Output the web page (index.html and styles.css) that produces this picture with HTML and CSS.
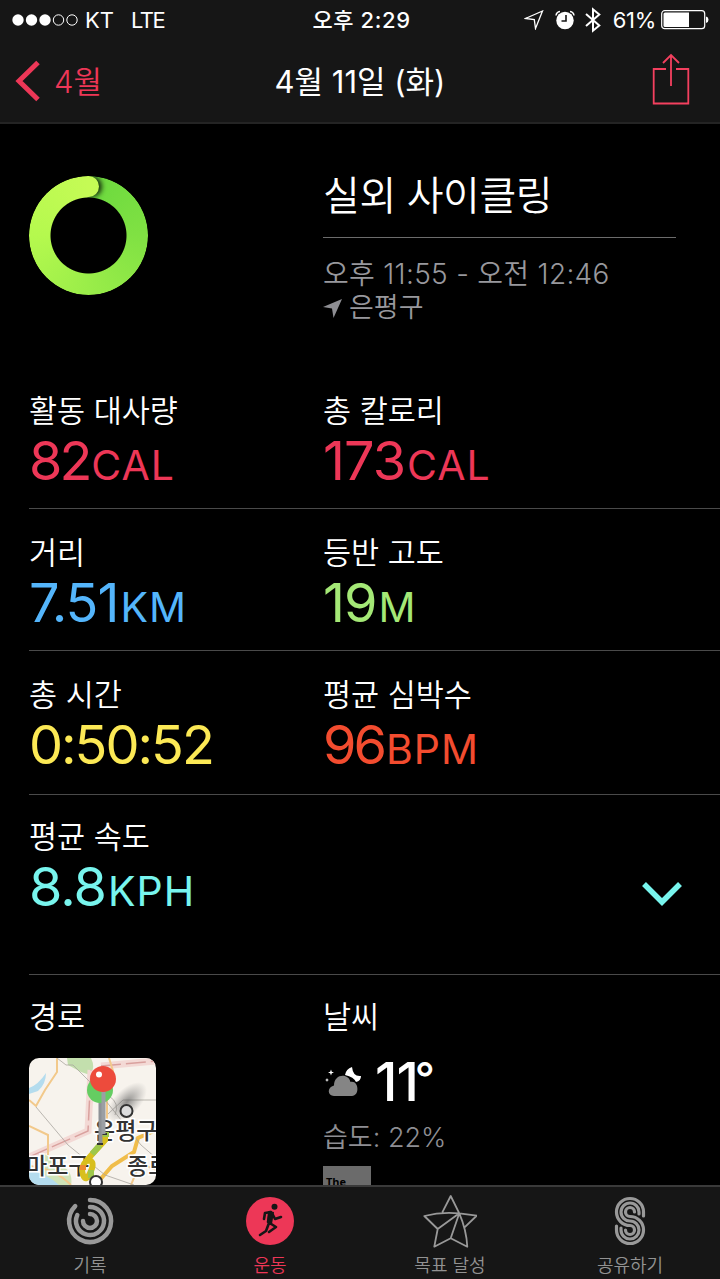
FILE: index.html
```html
<!DOCTYPE html>
<html lang="ko">
<head>
  <meta charset="UTF-8">
  <meta name="viewport" content="width=device-width, initial-scale=1.0">
  <title>실외 사이클링</title>
  <link rel="stylesheet" href="styles.css">
</head>
<body>

  <div class="phone">
    <header>
      <div class="status-bar">
        <div class="carrier">
          <svg width="66" height="14" viewBox="0 0 66 14">
            <g fill="#fff"><circle cx="6" cy="7" r="5.7"/><circle cx="19.5" cy="7" r="5.7"/><circle cx="33" cy="7" r="5.7"/></g>
            <g fill="none" stroke="#fff"><circle cx="46.5" cy="7" r="5.2"/><circle cx="60" cy="7" r="5.2"/></g>
          </svg>
          <span class="carrier-name">KT</span>
          <span class="network">LTE</span>
        </div>
        <div class="clock">오후 2:29</div>
        <div class="indicators">
          <svg class="location" width="20" height="20" viewBox="0 0 20 20">
            <path d="M18.5 1 1.5 8.5 10.3 9.7 11.5 18.5Z" fill="none" stroke="#fff" stroke-width="1.3"/>
          </svg>
          <svg class="alarm" width="20" height="20" viewBox="0 0 20 20">
            <circle cx="10" cy="10.5" r="8.7" fill="#fff"/>
            <path d="M1 5.5Q1.5 2 5 1.5M19 5.5Q18.5 2 15 1.5" fill="none" stroke="#fff" stroke-width="1.5"/>
            <path d="M11 5v6H6.5" fill="none" stroke="#161616" stroke-width="1.6"/>
          </svg>
          <svg class="bluetooth" width="16" height="26" viewBox="0 0 16 26">
            <path d="M1 7 14.3 18.5 8 23.7V2.3L14.3 7.5 1 19" fill="none" stroke="#fff" stroke-width="2"/>
          </svg>
          <span class="percent">61%</span>
          <svg width="48" height="20" viewBox="0 0 48 20">
            <rect x="0.7" y="0.7" width="43" height="18" rx="3" fill="none" stroke="#fff" stroke-width="1.2"/>
            <path d="M4 2.5H28V17H4Q2.5 17 2.5 15.5V4Q2.5 2.5 4 2.5Z" fill="#fff"/>
            <path d="M45 6.5Q47.5 7 47.5 9.7T45 13Z" fill="#fff"/>
          </svg>
        </div>
      </div>

      <nav class="nav-bar">
        <a class="back">
          <svg width="26" height="42" viewBox="0 0 26 42"><path d="M23 2.5 4 21 23 39.5" fill="none" stroke="#ed3757" stroke-width="5"/></svg>
          <span>4월</span>
        </a>
        <h1>4월 11일 (화)</h1>
        <a class="share">
          <svg width="38" height="52" viewBox="0 0 38 52">
            <path d="M14 16H1.7V50.5H36.3V16H24M19 33V2M11 10 19 2 27 10" fill="none" stroke="#f4405f" stroke-width="1.8"/>
          </svg>
        </a>
      </nav>
    </header>

    <main>
      <section class="summary">
        <div class="ring"></div>
        <div class="summary-info">
          <h2>실외 사이클링</h2>
          <p class="time">오후 11:55 - 오전 12:46</p>
          <p class="place">
            <svg width="19" height="19" viewBox="0 0 19 19"><path d="M19 0 0 8 9 9.5 10.5 19Z" fill="#8e8e93"/></svg>
            <span>은평구</span>
          </p>
        </div>
      </section>

      <section class="row">
        <div class="stat">
          <div class="label">활동 대사량</div>
          <div class="value move">82<span class="unit">CAL</span></div>
        </div>
        <div class="stat">
          <div class="label">총 칼로리</div>
          <div class="value wide move">173<span class="unit">CAL</span></div>
        </div>
      </section>

      <section class="row">
        <div class="stat">
          <div class="label">거리</div>
          <div class="value wide distance">7.51<span class="unit">KM</span></div>
        </div>
        <div class="stat">
          <div class="label">등반 고도</div>
          <div class="value wide elevation">19<span class="unit">M</span></div>
        </div>
      </section>

      <section class="row time-row">
        <div class="stat">
          <div class="label">총 시간</div>
          <div class="value duration">0:50:52</div>
        </div>
        <div class="stat">
          <div class="label">평균 심박수</div>
          <div class="value heart">96<span class="unit">BPM</span></div>
        </div>
      </section>

      <section class="row speed-row">
        <div class="stat">
          <div class="label">평균 속도</div>
          <div class="value wide speed">8.8<span class="unit">KPH</span></div>
        </div>
        <svg class="expand" width="40" height="26" viewBox="0 0 40 26"><path d="M2 3 20 21 38 3" fill="none" stroke="#78f5ee" stroke-width="5.5"/></svg>
      </section>

      <section class="row last-row">
        <div class="stat">
          <div class="label">경로</div>
          <svg class="map" width="127" height="127" viewBox="0 0 127 127">
            <defs>
              <radialGradient id="pinShadow"><stop offset="0" stop-color="#555" stop-opacity="0.65"/><stop offset="1" stop-color="#777" stop-opacity="0"/></radialGradient>
            </defs>
            <rect width="127" height="127" fill="#f7f3ed"/>
            <path d="M38 0H62Q67 10 61 17L52 14 39 7Z" fill="#c3dfad"/>
            <path d="M14 95 30 106Q45 113 42 127H22L10 108Z" fill="#cfe3b8"/>
            <path d="M17 15Q17 26 9 33L0 36V30Q9 27 17 15ZM0 112Q17 115 30 127H0Z" fill="#b4dcee"/>
            <path d="M0 99 59 73 62 12M72 8 127 3" fill="none" stroke="#f3d9d5" stroke-width="7"/>
            <path d="M0 99 59 73 62 12M72 8 127 3" fill="none" stroke="#d9a19e" stroke-width="1.5" stroke-dasharray="20 5"/>
            <g fill="none" stroke="#f2c98b" stroke-width="2">
              <path d="M28 0V14L16 32 7 48 0 42M0 68 19 77V97M80 0 84 13 78 38V61M102 127 111 105 127 112M0 108Q25 110 42 127"/>
              <path d="M127 72 109 80 105 94 83 108 69 124" stroke="#f0bd4a" stroke-width="4"/>
            </g>
            <path d="M28 0 37 7H44L65 28 112 87 127 100M7 49 39 87 76 117 105 127M79 56 94 42H127M80 38Q91 45 86 57" fill="none" stroke="#aaa69f" stroke-width="0.8"/>
            <ellipse cx="98" cy="44" rx="25" ry="13" transform="rotate(-45 98 44)" fill="url(#pinShadow)"/>
            <circle cx="97.5" cy="53" r="6" fill="#ddd" stroke="#333" stroke-width="2"/>
            <g class="map-label">
              <text x="65" y="81">은평구</text>
              <text x="-3" y="116">마포구</text>
              <text x="98" y="116">종로</text>
            </g>
            <path d="M76 76V82L58 102Q51 109 54 117T62 113 57 103" fill="none" stroke="#d8bf1d" stroke-width="6"/>
            <path d="M71 87 63 96M62 112V120M77 74V79" stroke="#9dc74b" stroke-width="6"/>
            <path d="M54 107V112" stroke="#ed8c31" stroke-width="6"/>
            <circle cx="67" cy="124" r="6" fill="#fff" stroke="#333" stroke-width="2"/>
            <path d="M68 86H74M72 76H78" stroke="#333" stroke-width="2"/>
            <path d="M71.5 42V85" stroke="#8e9297" stroke-width="4"/>
            <circle cx="71" cy="32" r="13" fill="#65cd62"/>
            <path d="M74.5 32V76" stroke="#9b9fa4" stroke-width="4"/>
            <circle cx="74" cy="21" r="13" fill="#ed4b3c"/>
            <circle cx="70" cy="16.5" r="3" fill="#fff"/>
          </svg>
        </div>
        <div class="stat">
          <div class="label">날씨</div>
          <div class="weather">
            <svg width="40" height="34" viewBox="-2 0 40 34">
              <path d="M27 2Q21 4 20 10 29 12 31 17 36 16 36 11 28 12 27 2Z" fill="#fff"/>
              <path d="M6 4.5 6.8 6.7 9 7.5 6.8 8.3 6 10.5 5.2 8.3 3 7.5 5.2 6.7ZM2 13 2.6 14.4 4 15 2.6 15.6 2 17 1.4 15.6 0 15 1.4 14.4Z" fill="#fff"/>
              <path d="M9 31C2 31 2 22 9 20.5 9 8 24 8 25.5 17 34 15 35 31 27 31Z" fill="#858585"/>
            </svg>
            <span class="temperature">11<span class="degree">°</span></span>
          </div>
          <div class="humidity">습도: 22%</div>
          <div class="provider">The</div>
        </div>
      </section>
    </main>

    <footer class="tab-bar">
      <a class="tab">
        <svg width="54" height="54" viewBox="0 0 54 54" fill="none" stroke="#999" stroke-width="4.5" stroke-linecap="round">
          <path d="M27 6A21 21 0 1 1 12.2 12.2M27 13A14 14 0 1 1 14.3 21.1M27 20A7 7 0 1 1 20 27"/>
        </svg>
        <span>기록</span>
      </a>
      <a class="tab active">
        <svg width="54" height="54" viewBox="0 0 54 54">
          <circle cx="27" cy="27" r="24" fill="#ed3757"/>
          <circle cx="31.5" cy="12.7" r="3" fill="#161616"/>
          <path d="M27 18 25 28 33 33 26 38M26 29 23 37 17 41M28 18 22 19 21 25M29 19 32 25 38 23" fill="none" stroke="#161616" stroke-width="2.6" stroke-linecap="round" stroke-linejoin="round"/>
          <path d="M25 17 31 18 29 30 24 28Z" fill="#161616"/>
        </svg>
        <span>운동</span>
      </a>
      <a class="tab">
        <svg width="54" height="54" viewBox="0 0 54 54" fill="none" stroke="#999" stroke-width="1.8" stroke-linejoin="round">
          <path d="M36.3 19.3 27.7 2 19.3 18.3M36.3 19.3Q18 17.5 1.3 22L14.7 35 11.3 52.7 27.7 44.3 44.3 52.7Q43.5 36 36.3 19.3L53.7 21.7 41.3 33.7M14.7 35 36.3 19.3 27.7 44.3"/>
        </svg>
        <span>목표 달성</span>
      </a>
      <a class="tab">
        <svg width="54" height="54" viewBox="0 0 54 54" fill="none" stroke="#999" stroke-width="3.2" stroke-linecap="round">
          <path d="M40.5 22V18A13.5 13.5 0 1 0 27 31.5A4.5 4.5 0 1 1 22.5 36"/>
          <path d="M36 20V18A9 9 0 1 0 27 27A9 9 0 1 1 18 36V34"/>
          <path d="M31.5 18A4.5 4.5 0 1 0 27 22.5A13.5 13.5 0 1 1 13.5 36V32"/>
        </svg>
        <span>공유하기</span>
      </a>
    </footer>
  </div>

</body>
</html>
```
FILE: styles.css
```css
* {
  box-sizing: border-box;
}

body {
  margin: 0;
  background-color: #000;
  color: #fff;
  font-family: Inter, 'Noto Sans CJK KR', sans-serif;
  font-weight: 350;
}

h1, h2, p {
  margin: 0;
  font-weight: inherit;
}

svg {
  display: block;
  flex-shrink: 0;
}

.phone {
  width: 720px;
  height: 1279px;
  display: flex;
  flex-direction: column;
  overflow: hidden;
}

header {
  height: 124px;
  background-color: #161616;
  border-bottom: 2px solid #242424;
}

.status-bar {
  display: grid;
  grid-template-columns: 1fr auto 1fr;
  align-items: center;
  height: 40px;
  padding: 0 11px 0 12px;
  font-size: 22px;
  font-weight: 400;
}

.carrier,
.indicators {
  display: flex;
  align-items: center;
}

.carrier-name {
  margin-left: 7px;
}

.network {
  margin-left: 17px;
  letter-spacing: -1.5px;
}

.clock {
  padding: 0 0 4px 2px;
  font-weight: 500;
  letter-spacing: 0.6px;
}

.indicators {
  justify-content: flex-end;
}

.alarm {
  margin-left: 11px;
}

.bluetooth {
  margin-left: 10px;
}

.percent {
  margin: 0 5px 0 12px;
  letter-spacing: -0.3px;
}

.nav-bar {
  display: grid;
  grid-template-columns: 1fr auto 1fr;
  align-items: center;
  height: 82px;
  padding: 0 30px 0 15px;
  font-size: 31px;
}

.back {
  display: flex;
  align-items: center;
  gap: 13px;
  color: #ed3757;
}

.back span {
  padding-bottom: 4px;
}

.nav-bar h1 {
  padding: 0 0 4px 15px;
  font-size: 31px;
  font-weight: 400;
}

.share {
  justify-self: end;
  padding-bottom: 5px;
}

main {
  flex: 1;
  min-height: 0;
  padding-left: 29px;
  overflow: hidden;
}

.summary {
  display: grid;
  grid-template-columns: 294px 1fr;
  height: 243px;
  padding: 42px 44px 0 0;
}

.ring {
  position: relative;
  width: 119px;
  height: 119px;
  margin-top: 10px;
  border-radius: 50%;
  background: conic-gradient(#6bd93e, #80e143 25%, #9aed49 50%, #b5f94e 75%, #c5fb55);
  -webkit-mask: radial-gradient(circle, transparent 37.5px, #000 38.5px);
  mask: radial-gradient(circle, transparent 37.5px, #000 38.5px);
}

.ring::after {
  content: '';
  position: absolute;
  top: 0;
  left: 49px;
  width: 21px;
  height: 21px;
  border-radius: 50%;
  background-color: #c5fb55;
  box-shadow: 3px 0 5px rgba(0, 0, 0, 0.8);
  clip-path: inset(-5px -12px -5px 9px);
}

.summary h2 {
  height: 72px;
  padding-bottom: 14px;
  border-bottom: 1px solid #6c6c6c;
  font-size: 40px;
  letter-spacing: -0.4px;
  line-height: 59px;
}

.time,
.place {
  color: #98989d;
  font-size: 27px;
  line-height: 34px;
}

.time {
  margin-top: 19px;
  font-size: 28px;
  letter-spacing: 0.3px;
}

.place {
  display: flex;
  align-items: center;
  gap: 7px;
}

.row {
  display: grid;
  grid-template-columns: 294px 1fr;
  height: 142px;
  padding-top: 21px;
  border-bottom: 1px solid #4a4a4a;
}

.label {
  height: 44px;
  font-size: 30.5px;
  line-height: 46px;
}

.value {
  height: 56px;
  font-size: 54px;
  font-weight: 400;
  letter-spacing: -3px;
  line-height: 57px;
  white-space: nowrap;
}

.value.wide {
  letter-spacing: -1px;
}

.unit {
  margin-left: 2px;
  font-size: 41px;
  letter-spacing: 1px;
}

.move {
  color: #ed3757;
}

.distance {
  color: #54b5fb;
}

.elevation {
  color: #a4e876;
}

.duration {
  color: #fce955;
  letter-spacing: -2px;
}

.heart {
  color: #f34c2f;
}

.speed {
  color: #78f5ee;
}

.time-row {
  height: 144px;
}

.speed-row {
  height: 180px;
  padding-top: 19px;
}

.expand {
  justify-self: end;
  margin: 67px 38px 0 0;
}

.last-row {
  height: auto;
  padding-top: 19px;
  border-bottom: none;
}

.map {
  margin-top: 20px;
  border-radius: 10px;
}

.map-label {
  fill: #333;
  stroke: #fff;
  stroke-width: 3px;
  paint-order: stroke;
  font-size: 23px;
  font-weight: 500;
}

.weather {
  display: flex;
  align-items: center;
  gap: 12px;
  height: 60px;
  margin-top: 14px;
}

.temperature {
  font-size: 54px;
  font-weight: 500;
  line-height: 56px;
  letter-spacing: -1px;
}

.degree {
  margin-left: -3px;
  font-size: 44px;
  line-height: 40px;
  vertical-align: 7px;
}

.humidity {
  margin-top: 2px;
  color: #8e8e93;
  font-size: 27px;
  line-height: 47px;
}

.provider {
  width: 48px;
  height: 30px;
  margin-top: 5px;
  padding-left: 3px;
  background-color: #6b6b6b;
  color: #000;
  font-family: 'Open Sans', sans-serif;
  font-size: 11px;
  font-weight: 700;
  line-height: 32px;
}

.tab-bar {
  display: grid;
  grid-template-columns: repeat(4, 1fr);
  height: 94px;
  border-top: 2px solid #3a3a3a;
  background-color: #161616;
}

.tab {
  display: flex;
  flex-direction: column;
  align-items: center;
  padding-top: 7px;
  color: #929292;
  font-size: 18px;
  line-height: 35px;
}

.tab.active {
  color: #ed3757;
}
```
